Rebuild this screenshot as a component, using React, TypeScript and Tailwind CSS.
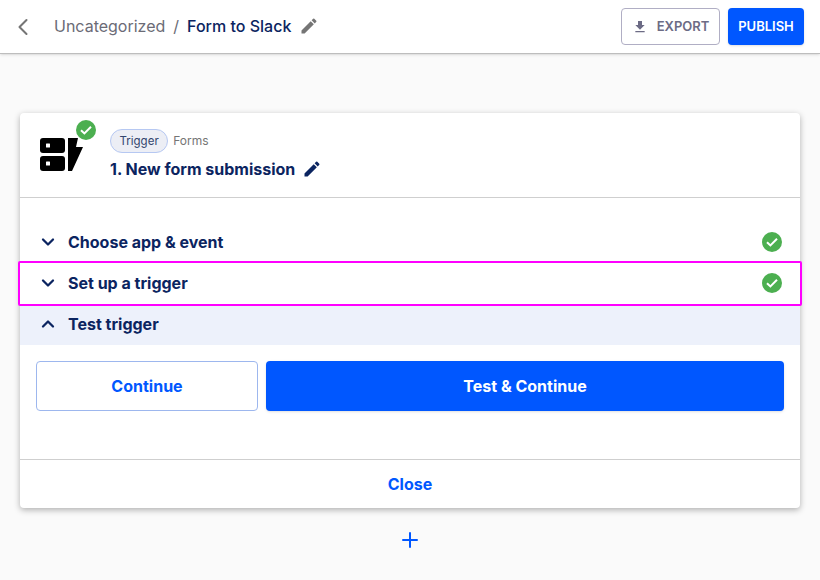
import { ChevronDown, ChevronLeft, ChevronUp, Plus } from "lucide-react";

function Pencil({ className }: { className: string }) {
  return (
    <svg viewBox="0 0 24 24" className={className} fill="currentColor">
      <path d="M3 17.25V21h3.75L17.81 9.94l-3.75-3.75L3 17.25zM20.71 7.04a1 1 0 0 0 0-1.41l-2.34-2.34a1 1 0 0 0-1.41 0l-1.83 1.83 3.75 3.75 1.83-1.83z" />
    </svg>
  );
}

function CheckBadge({ className }: { className: string }) {
  return (
    <svg viewBox="0 0 20 20" className={className}>
      <circle cx="10" cy="10" r="10" fill="#4caf50" />
      <path d="M5 10.2l3.4 3.2 6.6-6.6" fill="none" stroke="#fff" strokeWidth="2" />
    </svg>
  );
}

function FormsLogo() {
  return (
    <svg viewBox="0 0 43 34" className="h-[34px] w-[43px]">
      <rect x="0" y="0" width="25" height="15" rx="3" fill="#000" />
      <rect x="0" y="18" width="25" height="15" rx="3" fill="#000" />
      <rect x="6" y="5.5" width="4" height="4" rx="0.5" fill="#fff" />
      <rect x="6" y="23.5" width="4" height="4" rx="0.5" fill="#fff" />
      <path d="M28 0h10l-2 9h7l-11 24h-4z" fill="#000" />
    </svg>
  );
}

function StepRow({ title, done }: { title: string; done: boolean }) {
  return (
    <div className="flex h-[41px] items-center pb-[2px] pl-[18px] pr-[18px]">
      <ChevronDown className="h-[20px] w-[20px] text-[#0b2460]" strokeWidth={2.75} />
      <span className="ml-[10px] flex-1 text-[16px] font-bold text-[#0b2460]">{title}</span>
      {done && <CheckBadge className="h-[20px] w-[20px]" />}
    </div>
  );
}

export default function App() {
  return (
    <div className="flex h-[580px] w-[820px] flex-col overflow-hidden bg-[#fafafa] font-['Inter',sans-serif]">
      {/* top bar */}
      <div className="flex h-[54px] shrink-0 items-center border-b border-[#bdbdbd] bg-white pl-[9px] pr-[16px] shadow-sm">
        <ChevronLeft className="h-[28px] w-[28px] text-[#757575]" strokeWidth={1.75} />
        <span className="ml-[17px] -mt-[2px] text-[16px] text-[#6b6b76]">Uncategorized</span>
        <span className="ml-[8px] -mt-[2px] text-[16px] text-[#6b6b76]">/</span>
        <span className="ml-[8px] -mt-[2px] text-[16px] font-medium text-[#0b2460]">Form to Slack</span>
        <Pencil className="ml-[8px] -mt-[1px] h-[20px] w-[20px] text-[#757575]" />
        <div className="ml-auto flex items-center gap-[8px]">
          <button className="flex h-[37px] w-[99px] items-center justify-center gap-[9px] rounded-[4px] border border-[#b0aec4] text-[13px] font-semibold text-[#6c6b85]">
            <svg viewBox="0 0 24 24" className="h-[16px] w-[16px]" fill="currentColor">
              <path d="M19 9h-4V3H9v6H5l7 7 7-7zM5 18v2h14v-2H5z" />
            </svg>
            EXPORT
          </button>
          <button className="h-[37px] w-[76px] rounded-[4px] bg-[#0057ff] text-[13px] font-semibold text-white shadow-sm">
            PUBLISH
          </button>
        </div>
      </div>

      {/* trigger card */}
      <div className="mx-[20px] mt-[59px] rounded-[4px] bg-white shadow-[0_2px_6px_rgba(0,0,0,0.3)]">
        <div className="flex h-[85px] border-b border-[#cfcfcf]">
          <div className="relative ml-[20px] mt-[25px] h-[34px] w-[43px]">
            <FormsLogo />
            <CheckBadge className="absolute -top-[18px] left-[36px] h-[20px] w-[20px]" />
          </div>
          <div className="ml-[27px] mt-[16px]">
            <div className="flex items-center gap-[5px]">
              <span className="rounded-full border border-[#b6c8f2] bg-[#eceef5] px-[8.5px] pt-[3px] pb-[2px] text-[11.5px] text-[#33466e]">Trigger</span>
              <span className="text-[12px] text-[#757575]">Forms</span>
            </div>
            <div className="mt-[4px] flex items-center gap-[7px]">
              <span className="text-[16px] font-bold text-[#0b2460]">1. New form submission</span>
              <Pencil className="h-[20px] w-[20px] text-[#0b2460]" />
            </div>
          </div>
        </div>

        <div className="pt-[24px]">
          <StepRow title="Choose app & event" done />
          <div className="relative">
            <StepRow title="Set up a trigger" done />
            <div className="absolute -inset-x-[2px] -inset-y-[2px] rounded-[2px] border-2 border-[#ff00ff]" />
          </div>
          <div className="flex h-[41px] items-center bg-[#edf1fb] pb-[2px] pl-[18px]">
            <ChevronUp className="h-[20px] w-[20px] text-[#0b2460]" strokeWidth={2.75} />
            <span className="ml-[10px] text-[16px] font-bold text-[#0b2460]">Test trigger</span>
          </div>
        </div>

        <div className="flex gap-[8px] px-[16px] pt-[16px] pb-[48px]">
          <button className="h-[50px] w-[222px] rounded-[4px] border border-[#9db7ee] text-[16px] font-bold text-[#0057ff]">Continue</button>
          <button className="h-[50px] flex-1 rounded-[4px] bg-[#0057ff] text-[16px] font-bold text-white shadow-sm">Test &amp; Continue</button>
        </div>

        <div className="flex h-[49px] items-center justify-center border-t border-[#cfcfcf] text-[16px] font-bold text-[#0057ff]">Close</div>
      </div>

      <div className="mt-[20px] flex justify-center">
        <Plus className="h-[24px] w-[24px] text-[#0057ff]" strokeWidth={2} />
      </div>
    </div>
  );
}
